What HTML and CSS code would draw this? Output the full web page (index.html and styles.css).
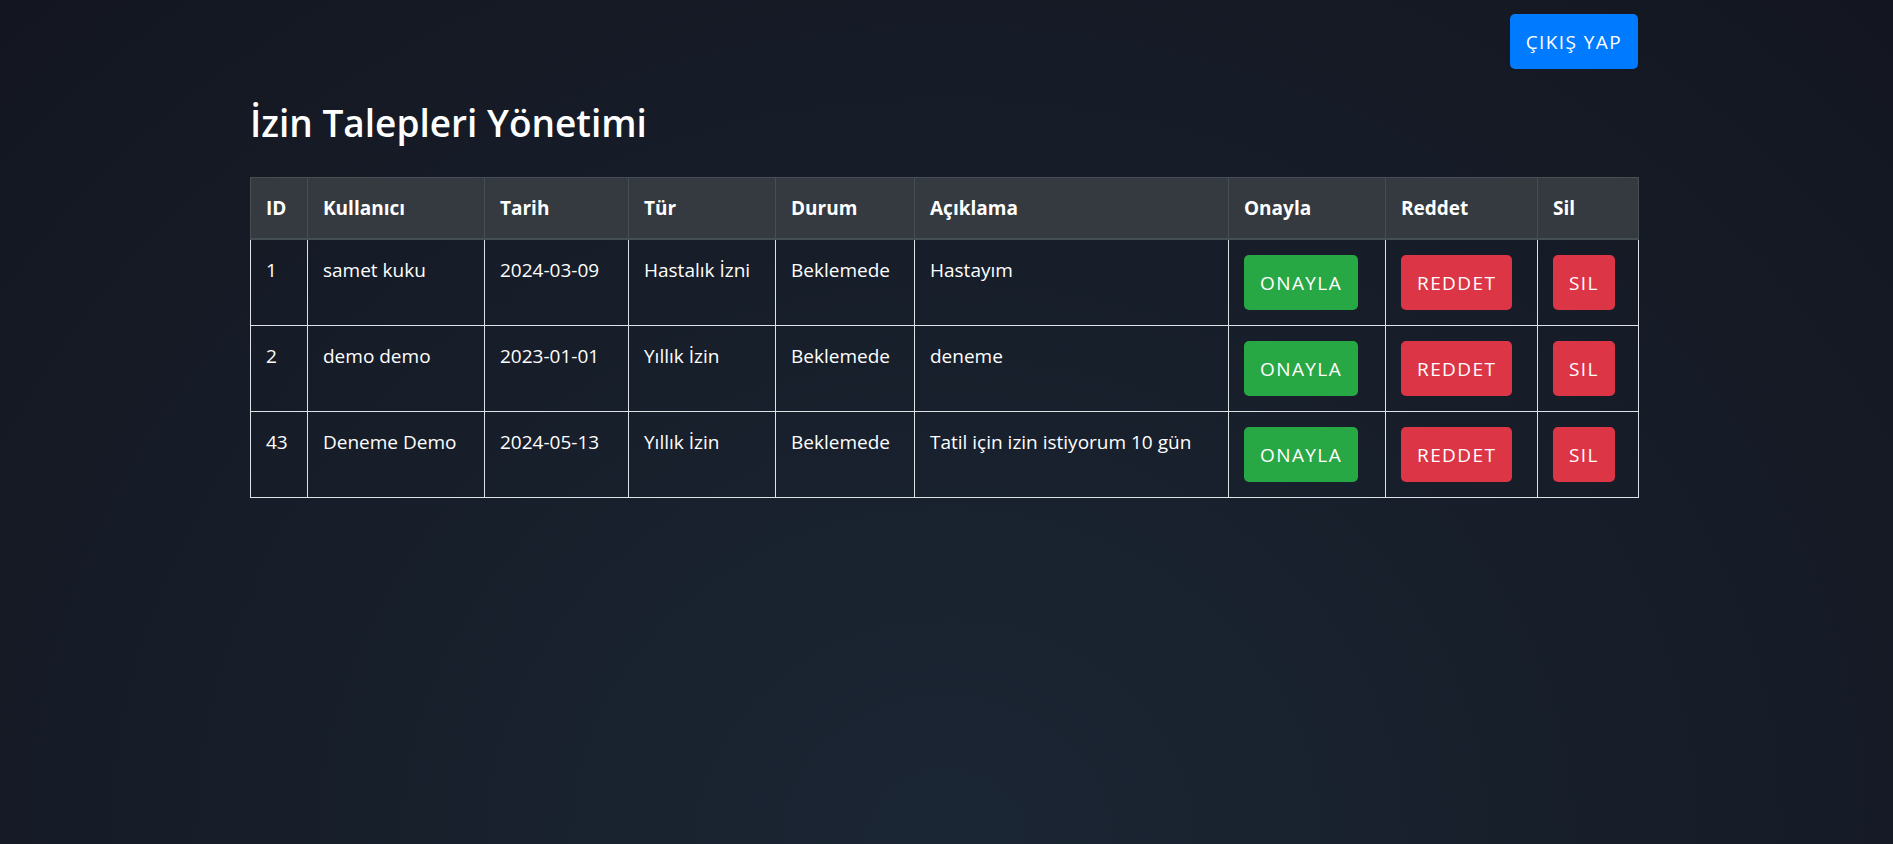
FILE: index.html
```html
<!DOCTYPE html>
<html>
<head>
<meta charset="utf-8">
<title>İzin Talepleri Yönetimi</title>
<link rel="stylesheet" href="styles.css">
</head>
<body>
<div class="page">
  <div class="topbar">
    <button class="btn btn-primary">Çıkış Yap</button>
  </div>
  <h2 class="title">İzin Talepleri Yönetimi</h2>
  <table class="requests">
    <colgroup>
      <col class="c-id"><col class="c-user"><col class="c-date"><col class="c-type"><col class="c-status"><col class="c-desc"><col class="c-ok"><col class="c-no"><col class="c-del">
    </colgroup>
    <thead>
      <tr>
        <th>ID</th><th>Kullanıcı</th><th>Tarih</th><th>Tür</th><th>Durum</th><th>Açıklama</th><th>Onayla</th><th>Reddet</th><th>Sil</th>
      </tr>
    </thead>
    <tbody>
      <tr>
        <td>1</td><td>samet kuku</td><td>2024-03-09</td><td>Hastalık İzni</td><td>Beklemede</td><td>Hastayım</td>
        <td><button class="btn btn-success">Onayla</button></td>
        <td><button class="btn btn-danger">Reddet</button></td>
        <td><button class="btn btn-danger">Sil</button></td>
      </tr>
      <tr>
        <td>2</td><td>demo demo</td><td>2023-01-01</td><td>Yıllık İzin</td><td>Beklemede</td><td>deneme</td>
        <td><button class="btn btn-success">Onayla</button></td>
        <td><button class="btn btn-danger">Reddet</button></td>
        <td><button class="btn btn-danger">Sil</button></td>
      </tr>
      <tr>
        <td>43</td><td>Deneme Demo</td><td>2024-05-13</td><td>Yıllık İzin</td><td>Beklemede</td><td>Tatil için izin istiyorum 10 gün</td>
        <td><button class="btn btn-success">Onayla</button></td>
        <td><button class="btn btn-danger">Reddet</button></td>
        <td><button class="btn btn-danger">Sil</button></td>
      </tr>
    </tbody>
  </table>
</div>
</body>
</html>
```
FILE: styles.css
```css
* { box-sizing: border-box; }
html, body { margin: 0; padding: 0; }
body {
  min-height: 100vh;
  background: radial-gradient(ellipse at 50% 100%, #1b2634 0%, #131620 100%);
  color: #fff;
  font-family: "Open Sans", "Noto Sans", sans-serif;
  font-size: 19px;
  line-height: 30px;
  padding-right: 5px;
}
.page {
  width: 1388px;
  margin: 0 auto;
}
.topbar {
  display: flex;
  justify-content: flex-end;
  padding-top: 14px;
}
.btn {
  display: inline-block;
  border: 0;
  border-radius: 5px;
  color: #fff;
  font-family: inherit;
  font-size: 19px;
  line-height: 30px;
  font-weight: 400;
  padding: 12.5px 16px;
  text-transform: uppercase;
  letter-spacing: 1.4px;
  cursor: pointer;
}
.btn-primary { background: #007bff; }
.btn-success { background: #28a745; }
.btn-danger { background: #dc3545; }
.title {
  margin: 31px 0 31px;
  font-size: 37px;
  line-height: 46px;
  font-weight: 600;
}
.requests {
  width: 1388px;
  border-collapse: collapse;
  table-layout: fixed;
}
.c-id { width: 57px; }
.c-user { width: 177px; }
.c-date { width: 144px; }
.c-type { width: 147px; }
.c-status { width: 139px; }
.c-desc { width: 314px; }
.c-ok { width: 157px; }
.c-no { width: 152px; }
.c-del { width: 101px; }
.requests th, .requests td {
  padding: 15px;
  text-align: left;
  vertical-align: top;
  white-space: nowrap;
}
.requests th {
  background: #343a40;
  border: 1px solid #454d55;
  border-bottom-width: 2px;
  font-weight: 700;
}
.requests td {
  border: 1px solid #dee2e6;
}
.requests td .btn { vertical-align: top; }
```
